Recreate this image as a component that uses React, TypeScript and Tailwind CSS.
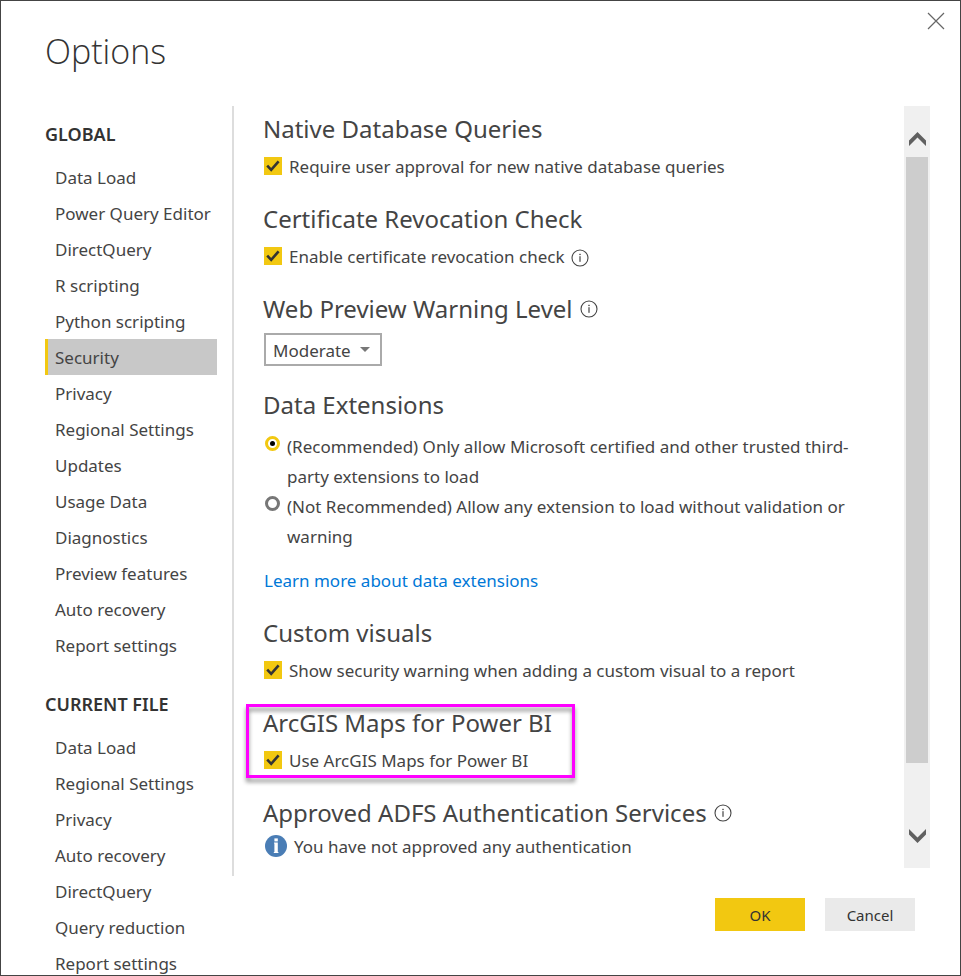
import { useState, type ReactNode } from 'react';

const globalItems = [
  'Data Load',
  'Power Query Editor',
  'DirectQuery',
  'R scripting',
  'Python scripting',
  'Security',
  'Privacy',
  'Regional Settings',
  'Updates',
  'Usage Data',
  'Diagnostics',
  'Preview features',
  'Auto recovery',
  'Report settings',
];

const fileItems = [
  'Data Load',
  'Regional Settings',
  'Privacy',
  'Auto recovery',
  'DirectQuery',
  'Query reduction',
  'Report settings',
];

function InfoIcon() {
  return (
    <svg className="size-[18px] shrink-0" viewBox="0 0 18 18" fill="none" aria-hidden="true">
      <circle cx="9" cy="9" r="8" stroke="#444" strokeWidth="1.1" />
      <rect x="8.4" y="7.2" width="1.2" height="5.6" fill="#444" />
      <rect x="8.3" y="4.8" width="1.4" height="1.3" fill="#444" />
    </svg>
  );
}

function NavGroup({ title, items, active }: { title: string; items: string[]; active?: string }) {
  return (
    <section>
      <h2 className="flex h-[50px] items-center text-[18px] font-semibold text-[#333]">{title}</h2>
      <ul>
        {items.map((item) => (
          <li key={item}>
            <button
              type="button"
              className={
                item === active
                  ? 'flex h-9 w-full items-center border-l-[3px] border-[#f2c811] bg-[#c8c8c8] pt-0.5 pl-[7px] text-left'
                  : 'flex h-9 w-full items-center border-l-[3px] border-transparent pt-0.5 pl-[7px] text-left'
              }
            >
              {item}
            </button>
          </li>
        ))}
      </ul>
    </section>
  );
}

function Heading({ children, info }: { children: ReactNode; info?: boolean }) {
  return (
    <h3 className="flex h-[46px] items-center gap-[7px] text-2xl whitespace-nowrap text-[#444]">
      {children}
      {info && <InfoIcon />}
    </h3>
  );
}

function Check({ label, info }: { label: string; info?: boolean }) {
  const [checked, setChecked] = useState(true);
  return (
    <div className="flex h-7 items-center gap-[7px]">
      <label className="flex items-center gap-[7px]">
        <span className="relative ml-px size-[18px] shrink-0">
          <input
            type="checkbox"
            checked={checked}
            onChange={() => setChecked(!checked)}
            className="block size-[18px] appearance-none bg-[#c8c8c8] checked:bg-[#f2c811]"
          />
          {checked && (
            <svg className="pointer-events-none absolute inset-0 size-[18px]" viewBox="0 0 18 18" fill="none" aria-hidden="true">
              <path d="M3.2 8.6 7.2 12.8 14.6 4.4" stroke="#333" strokeWidth="2.6" />
            </svg>
          )}
        </span>
        <span className="pt-0.5">{label}</span>
      </label>
      {info && (
        <span className="pt-1">
          <InfoIcon />
        </span>
      )}
    </div>
  );
}

function Radio({ label, checked, onSelect }: { label: string; checked: boolean; onSelect: () => void }) {
  return (
    <label className="flex items-start gap-[7px] leading-[30px]">
      <span className="relative mt-1 ml-0.5 size-[15px] shrink-0">
        <input
          type="radio"
          name="extensions"
          checked={checked}
          onChange={onSelect}
          className="block size-[15px] appearance-none rounded-full border-[3px] border-[#777] checked:border-[#f2c811]"
        />
        {checked && <span className="pointer-events-none absolute inset-[5px] rounded-full bg-black" />}
      </span>
      {label}
    </label>
  );
}

export default function App() {
  const [extensions, setExtensions] = useState('recommended');

  return (
    <div
      role="dialog"
      aria-labelledby="dialog-title"
      className="flex h-screen flex-col overflow-hidden border border-[#444] bg-white font-['Noto_Sans','Open_Sans',sans-serif] text-[17px] text-[#444]"
    >
      <header className="flex h-[105px] shrink-0 items-start justify-between pr-[15px] pl-11">
        <h1 id="dialog-title" className="pt-6 font-['Open_Sans','Noto_Sans',sans-serif] text-[34px] leading-[52px] font-light text-[#333]">
          Options
        </h1>
        <button type="button" aria-label="Close" className="mt-[11px]">
          <svg className="size-[18px]" viewBox="0 0 18 18" fill="none" aria-hidden="true">
            <path d="M1 1 17 17M17 1 1 17" stroke="#666" strokeWidth="1.2" />
          </svg>
        </button>
      </header>

      <div className="flex min-h-0 flex-1">
        <nav aria-label="Option categories" className="flex w-[216px] shrink-0 flex-col gap-4 pt-[3px] pl-11">
          <NavGroup title="GLOBAL" items={globalItems} active="Security" />
          <NavGroup title="CURRENT FILE" items={fileItems} />
        </nav>

        <div className="ml-[15px] flex min-w-0 flex-1 flex-col">
          <div className="flex min-h-0 flex-1 border-l-2 border-[#ddd] pr-[30px] pb-2">
            <main className="flex min-w-0 flex-1 flex-col gap-4 overflow-hidden pr-12 pl-[29px]">
              <section>
                <Heading>Native Database Queries</Heading>
                <Check label="Require user approval for new native database queries" />
              </section>

              <section>
                <Heading>Certificate Revocation Check</Heading>
                <Check label="Enable certificate revocation check" info />
              </section>

              <section>
                <Heading info>Web Preview Warning Level</Heading>
                <div className="relative mt-px ml-px w-[118px]">
                  <select
                    aria-label="Web preview warning level"
                    defaultValue="Moderate"
                    className="block h-[33px] w-full appearance-none border-2 border-[#aaa] bg-white pt-0.5 pl-[7px]"
                  >
                    <option>Strict</option>
                    <option>Moderate</option>
                    <option>None</option>
                  </select>
                  <svg className="pointer-events-none absolute top-3.5 right-3 h-[5px] w-2.5" viewBox="0 0 10 5" aria-hidden="true">
                    <path d="M0 0H10L5 5Z" fill="#777" />
                  </svg>
                </div>
              </section>

              <section>
                <Heading>Data Extensions</Heading>
                <div role="radiogroup" aria-label="Data extensions" className="pt-1">
                  <Radio
                    label="(Recommended) Only allow Microsoft certified and other trusted third-party extensions to load"
                    checked={extensions === 'recommended'}
                    onSelect={() => setExtensions('recommended')}
                  />
                  <Radio
                    label="(Not Recommended) Allow any extension to load without validation or warning"
                    checked={extensions === 'any'}
                    onSelect={() => setExtensions('any')}
                  />
                </div>
                <a href="#extensions" className="mt-4 ml-px block leading-[26px] text-[#0078d7]">
                  Learn more about data extensions
                </a>
              </section>

              <section>
                <Heading>Custom visuals</Heading>
                <Check label="Show security warning when adding a custom visual to a report" />
              </section>

              <section className="relative">
                <Heading>ArcGIS Maps for Power BI</Heading>
                <Check label="Use ArcGIS Maps for Power BI" />
                <div className="pointer-events-none absolute top-1 -left-[17px] h-[74px] w-[329px] border-[3px] border-[#ff00ff] drop-shadow-[0_4px_2px_rgba(0,0,0,0.45)]" />
              </section>

              <section>
                <Heading info>Approved ADFS Authentication Services</Heading>
                <p className="ml-0.5 flex h-5 items-center gap-[7px]">
                  <svg className="size-[22px] shrink-0" viewBox="0 0 22 22" aria-hidden="true">
                    <circle cx="11" cy="11" r="11" fill="#4a7db5" />
                    <rect x="9.4" y="3.4" width="3.4" height="3" fill="#fff" />
                    <path d="M9 7.6H12.8V17H13.4V18H8.8V17H9.4V8.6H9Z" fill="#fff" />
                  </svg>
                  <span className="pt-0.5">You have not approved any authentication</span>
                </p>
              </section>
            </main>

            <div className="flex w-[26px] shrink-0 flex-col items-center bg-[#f0f0f0]">
              <button type="button" aria-label="Scroll up" className="flex h-[51px] w-full items-center justify-center pt-[15px]">
                <svg className="h-3.5 w-[17px]" viewBox="0 0 17 14" aria-hidden="true">
                  <path d="M8.5 0 17 8.5V14L8.5 5.5 0 14V8.5Z" fill="#606060" />
                </svg>
              </button>
              <div className="w-[22px] flex-1 bg-[#cdcdcd]" />
              <div className="flex h-[105px] w-full items-center justify-center">
                <button type="button" aria-label="Scroll down" className="mt-10">
                  <svg className="h-3.5 w-[17px]" viewBox="0 0 17 14" aria-hidden="true">
                    <path d="M8.5 14 17 5.5V0L8.5 8.5 0 0V5.5Z" fill="#606060" />
                  </svg>
                </button>
              </div>
            </div>
          </div>

          <footer className="flex h-[99px] shrink-0 items-start justify-end gap-5 pt-[22px] pr-[45px] text-[15px] text-[#333]">
            <button type="button" className="h-[33px] w-[90px] bg-[#f2c811] pt-0.5">
              OK
            </button>
            <button type="button" className="h-[33px] w-[90px] bg-[#eaeaea] pt-0.5">
              Cancel
            </button>
          </footer>
        </div>
      </div>
    </div>
  );
}
